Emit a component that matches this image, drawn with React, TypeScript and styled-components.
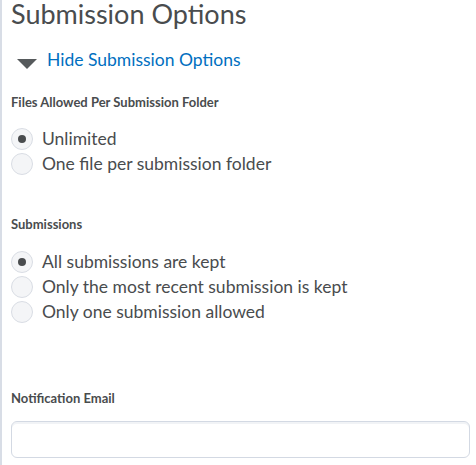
import React from "react";
import styled, { createGlobalStyle } from "styled-components";

const Global = createGlobalStyle`
  html, body { margin: 0; padding: 0; background: #fff; }
  body { font-family: Lato, "Open Sans", sans-serif; color: #494c4e; }
  * { box-sizing: border-box; }
`;

const Page = styled.div`
  border-left: 2px solid #d8dde6;
  padding: 0 6px 0 9px;
  min-height: 465px;
`;

const Title = styled.h2`
  margin: 0;
  font-size: 27px;
  font-weight: 400;
  line-height: 27px;
  color: #494c4e;
`;

const Toggle = styled.button`
  display: flex;
  align-items: center;
  gap: 10px;
  margin: 22px 0 0 6px;
  padding: 0;
  border: 0;
  background: none;
  font-family: inherit;
  font-size: 17.5px;
  color: #006fbf;
  cursor: pointer;
  line-height: 22px;
`;

const Caret = styled.span`
  width: 0;
  height: 0;
  border-left: 10px solid transparent;
  border-right: 10px solid transparent;
  border-top: 10px solid #565a5c;
  margin-top: 7px;
`;

const Label = styled.div<{ $top: number }>`
  margin-top: ${(p) => p.$top}px;
  font-size: 13px;
  font-weight: 700;
  line-height: 16px;
  color: #494c4e;
`;

const Group = styled.div<{ $top: number }>`
  display: flex;
  flex-direction: column;
  gap: 1px;
  margin-top: ${(p) => p.$top}px;
`;

const Option = styled.label`
  display: flex;
  align-items: center;
  gap: 9px;
  font-size: 17.5px;
  line-height: 24px;
  color: #494c4e;
`;

const Radio = styled.span<{ $on?: boolean }>`
  width: 22px;
  height: 22px;
  border-radius: 50%;
  border: 1px solid #d9dde4;
  background: #f4f5f7;
  display: flex;
  align-items: center;
  justify-content: center;
  flex: none;
  &::after {
    content: "";
    width: 8px;
    height: 8px;
    border-radius: 50%;
    background: ${(p) => (p.$on ? "#494c4e" : "transparent")};
  }
`;

const Input = styled.input`
  display: block;
  width: 459px;
  height: 37px;
  margin-top: 15px;
  border: 1px solid #d3d9e3;
  border-radius: 6px;
  background: #fff;
  box-shadow: inset 0 2px 0 0 rgba(185, 194, 208, 0.2);
  font-family: inherit;
  font-size: 16px;
  padding: 0 10px;
`;

export default function App() {
  return (
    <>
      <Global />
      <Page>
        <Title>Submission Options</Title>
        <Toggle>
          <Caret />
          Hide Submission Options
        </Toggle>
        <Label $top={23}>Files Allowed Per Submission Folder</Label>
        <Group $top={17}>
          <Option><Radio $on />Unlimited</Option>
          <Option><Radio />One file per submission folder</Option>
        </Group>
        <Label $top={40}>Submissions</Label>
        <Group $top={18}>
          <Option><Radio $on />All submissions are kept</Option>
          <Option><Radio />Only the most recent submission is kept</Option>
          <Option><Radio />Only one submission allowed</Option>
        </Group>
        <Label $top={66}>Notification Email</Label>
        <Input type="text" />
      </Page>
    </>
  );
}
